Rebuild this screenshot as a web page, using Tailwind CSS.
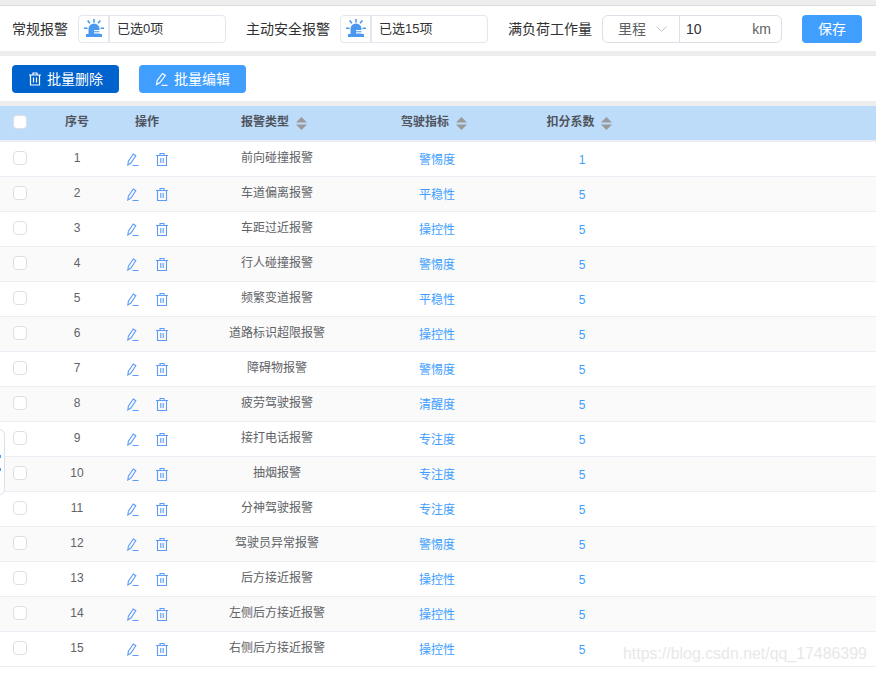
<!DOCTYPE html>
<html lang="zh-CN">
<head>
  <meta charset="UTF-8" />
  <title>报警配置</title>
  <script src="https://cdn.jsdelivr.net/npm/@tailwindcss/browser@4"></script>
</head>
<body class="relative h-[673px] overflow-hidden bg-white font-['Liberation_Sans','Noto_Sans_CJK_SC',sans-serif] text-[#606266]">

  <!-- Filter bar -->
  <div class="h-[6px] bg-[#ededed] border-b border-[#dcdcdc]"></div>
  <section class="flex h-[45px] items-center px-3 text-sm text-[#303133]">
    <span>常规报警</span>
    <div class="ml-2.5 flex h-7 w-[148px] items-center rounded border border-[#e4e7ed]">
      <span class="flex w-[29px] justify-center border-r-2 border-[#e4e7ed] h-full items-center box-content">
        <svg class="w-[20px] h-[19px]" viewBox="0 0 20 19" fill="#4a98f0"><path d="M4.500 15V10a5.500 5.500 0 0 1 11 0v1H10v1.200h5.500v1H10v1.200h5.500v.6z"/><path d="M2 15h16v3H2z"/><path d="M9.200 0h1.600v3.500H9.200zM3 2l1.300-1 2.200 2.800-1.300 1zM17 2l-1.300-1-2.200 2.800 1.300 1zM0 8.500h3.500v1.500H0zM16.500 8.500H20v1.500h-3.500z"/></svg>
      </span>
      <span class="ml-[7px] pt-px text-[13px]">已选0项</span>
    </div>
    <span class="ml-5">主动安全报警</span>
    <div class="ml-2.5 flex h-7 w-[148px] items-center rounded border border-[#e4e7ed]">
      <span class="flex w-[29px] justify-center border-r-2 border-[#e4e7ed] h-full items-center box-content">
        <svg class="w-[20px] h-[19px]" viewBox="0 0 20 19" fill="#4a98f0"><path d="M4.500 15V10a5.500 5.500 0 0 1 11 0v1H10v1.200h5.500v1H10v1.200h5.500v.6z"/><path d="M2 15h16v3H2z"/><path d="M9.200 0h1.600v3.500H9.200zM3 2l1.300-1 2.200 2.800-1.300 1zM17 2l-1.300-1-2.200 2.800 1.300 1zM0 8.500h3.500v1.500H0zM16.500 8.500H20v1.500h-3.500z"/></svg>
      </span>
      <span class="ml-[7px] pt-px text-[13px]">已选15项</span>
    </div>
    <span class="ml-5">满负荷工作量</span>
    <div class="ml-2.5 flex h-7 w-[180px] items-center rounded-md border border-[#dcdfe6]">
      <div class="flex h-full w-[77px] items-center border-r border-[#dcdfe6] pl-[15px] pt-px text-[#606266]">
        <span>里程</span>
        <svg class="ml-2.5 w-[11px] h-[6px]" viewBox="0 0 11 6" fill="none" stroke="#c0c4cc" stroke-width="1"><path d="M.5.500l5 5 5-5"/></svg>
      </div>
      <span class="ml-1.5 text-[#303133]">10</span>
      <span class="ml-auto mr-2.5 text-[#606266]">km</span>
    </div>
    <button class="ml-5 h-7 w-[60px] rounded bg-[#409eff] pt-px text-white">保存</button>
  </section>
  <div class="h-[5px] bg-[#ededed]"></div>

  <!-- Batch actions -->
  <section class="flex h-[45px] items-center gap-5 px-3">
    <button class="flex h-7 w-[107px] items-center justify-center gap-[5px] rounded bg-[#0062cc] text-sm text-white">
      <svg class="w-3.5 h-3.5" viewBox="0 0 14 14" fill="none" stroke="currentColor" stroke-width="1.200"><path d="M1 3h12M5 3V1h4v2M2.500 3v10h9V3M5.500 5.500v5M8.500 5.500v5"/></svg>
      批量删除
    </button>
    <button class="flex h-7 w-[107px] items-center justify-center gap-[5px] rounded bg-[#409eff] text-sm text-white">
      <svg class="w-3.5 h-3.5" viewBox="0 0 14 14" fill="none" stroke="currentColor" stroke-width="1.200"><path d="M1.500 12.500l.8-4L7.500 1.500l2.800 2-5.300 7zM6.500 13.300h6"/></svg>
      批量编辑
    </button>
  </section>
  <div class="h-[5px] bg-[#ededed]"></div>

  <!-- Table -->
  <div class="grid h-[34px] grid-cols-[42px_70px_70px_190px_130px_160px] items-center border-b-2 border-[#ebeef5] bg-[#bcdcfa] text-xs font-bold text-[#50545c] box-content">
    <span class="mb-[2px] ml-[13px] h-[14px] w-[14px] rounded-sm border border-[#dcdfe6] bg-white"></span>
    <span class="pb-[2px] text-center">序号</span>
    <span class="pb-[2px] text-center">操作</span>
    <span class="flex items-center justify-center gap-[7px] pr-[6px]"><span class="pb-[2px]">报警类型</span><svg class="w-[11px] h-[13px]" viewBox="0 0 11 13" fill="#9a9a9a"><path d="M5.500 0L11 5.500H0zM5.500 13L0 7.500h11z"/></svg></span>
    <span class="flex items-center justify-center gap-[7px] pr-[6px]"><span class="pb-[2px]">驾驶指标</span><svg class="w-[11px] h-[13px]" viewBox="0 0 11 13" fill="#9a9a9a"><path d="M5.500 0L11 5.500H0zM5.500 13L0 7.500h11z"/></svg></span>
    <span class="flex items-center justify-center gap-[6px] pr-[6px]"><span class="pb-[2px]">扣分系数</span><svg class="w-[11px] h-[13px]" viewBox="0 0 11 13" fill="#9a9a9a"><path d="M5.500 0L11 5.500H0zM5.500 13L0 7.500h11z"/></svg></span>
  </div>
  <div id="rows"></div>

  <!-- Collapsed side handle -->
  <div class="absolute left-[-6px] top-[429px] h-[66px] w-[11px] rounded-md border border-[#dcdfe6] bg-white">
    <span class="absolute right-[3px] top-[25px] h-[3px] w-[2px] bg-[#409eff]"></span>
    <span class="absolute right-[3px] top-[38px] h-[3px] w-[2px] bg-[#409eff]"></span>
  </div>

  <div class="absolute left-[623px] top-[644px] text-[15.9px] leading-5 text-[#e8e8e8]">https://blog.csdn.net/qq_17486399</div>

  <script>
    const data = [
      ["前向碰撞报警", "警惕度", 1], ["车道偏离报警", "平稳性", 5], ["车距过近报警", "操控性", 5],
      ["行人碰撞报警", "警惕度", 5], ["频繁变道报警", "平稳性", 5], ["道路标识超限报警", "操控性", 5],
      ["障碍物报警", "警惕度", 5], ["疲劳驾驶报警", "清醒度", 5], ["接打电话报警", "专注度", 5],
      ["抽烟报警", "专注度", 5], ["分神驾驶报警", "专注度", 5], ["驾驶员异常报警", "警惕度", 5],
      ["后方接近报警", "操控性", 5], ["左侧后方接近报警", "操控性", 5], ["右侧后方接近报警", "操控性", 5],
    ];
    document.getElementById("rows").innerHTML = data.map((r, i) => `
      <div class="grid h-[35px] grid-cols-[42px_70px_70px_190px_130px_160px] items-center border-b border-[#ebeef5] text-xs ${i % 2 ? "bg-[#fafafa]" : "bg-white"}">
        <span class="mb-[2px] ml-[13px] h-[14px] w-[14px] rounded-sm border border-[#dcdfe6] bg-white"></span>
        <span class="pb-[2px] text-center">${i + 1}</span>
        <span class="flex justify-center gap-[17px] text-[#5b9cfa]">
          <svg class="w-3 h-[13px]" viewBox="0 0 12 13" fill="none" stroke="currentColor" stroke-width="1.100"><path d="M.8 12l.6-3.800L6.300 1l2.500 1.700-4.900 7.300zM5.500 12.500h6"/></svg>
          <svg class="w-3 h-[13px]" viewBox="0 0 12 13" fill="none" stroke="currentColor" stroke-width="1.100"><path d="M0 2.500h12M4 2.500V.5h4v2M1.500 2.500v10h9v-10M4.800 5v5M7.200 5v5"/></svg>
        </span>
        <span class="pb-[2px] text-center">${r[0]}</span>
        <span class="pt-px text-center text-[#409eff]">${r[1]}</span>
        <span class="pt-px text-center text-[#409eff]">${r[2]}</span>
      </div>`).join("");
  </script>
</body>
</html>
